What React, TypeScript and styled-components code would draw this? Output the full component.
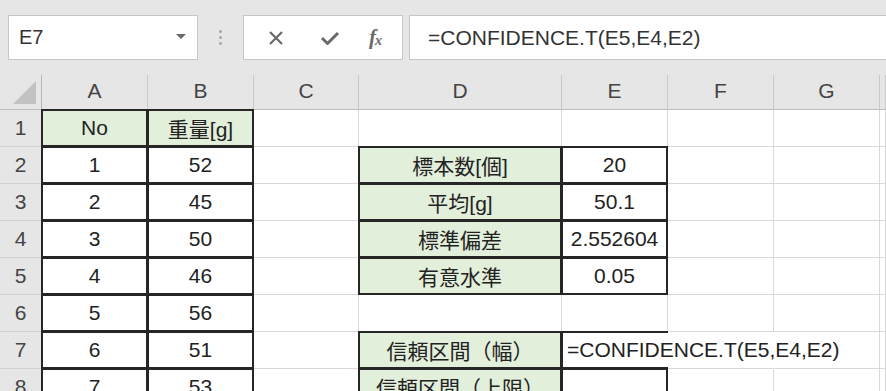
import React from "react";
import styled, { createGlobalStyle, css } from "styled-components";

const Global = createGlobalStyle`
  html, body { margin: 0; padding: 0; background: #ffffff; overflow: hidden; }
  body { width: 886px; height: 391px; font-family: "Liberation Sans", "Noto Sans CJK JP", sans-serif; }
`;

const Page = styled.div`
  width: 886px;
  height: 391px;
  overflow: hidden;
  display: flex;
  flex-direction: column;
`;

const Toolbar = styled.div`
  flex: 0 0 75px;
  height: 75px;
  box-sizing: border-box;
  padding: 15px 0 15px 8px;
  background: #e6e6e6;
  display: flex;
  align-items: stretch;
`;

const NameBox = styled.div`
  width: 190px;
  box-sizing: border-box;
  background: #fff;
  border: 1px solid #c6c6c6;
  display: flex;
  align-items: center;
  justify-content: space-between;
  padding: 0 11px 0 10px;
  font-size: 20px;
  color: #333;
`;

const DropArrow = styled.span`
  width: 0;
  height: 0;
  border-left: 5px solid transparent;
  border-right: 5px solid transparent;
  border-top: 5px solid #6a6a6a;
  margin-top: -2px;
`;

const Grip = styled.div`
  width: 45px;
  display: flex;
  flex-direction: column;
  align-items: center;
  justify-content: center;
  gap: 3px;
`;

const GripDot = styled.span`
  width: 3px;
  height: 3px;
  background: #a8a8a8;
  border-radius: 50%;
`;

const FxButtons = styled.div`
  width: 160px;
  box-sizing: border-box;
  background: #fff;
  border: 1px solid #c6c6c6;
  display: grid;
  grid-template-columns: 56px 52px 1fr;
  align-items: center;
  justify-items: center;
  padding-left: 4px;
`;

const FxLabel = styled.span`
  font-family: "Liberation Serif", serif;
  font-style: italic;
  font-weight: bold;
  font-size: 21px;
  color: #6a6a6a;
  margin-right: 8px;
  letter-spacing: -1px;
  & > sub {
    font-size: 14px;
    vertical-align: -1px;
  }
`;

const FormulaInput = styled.div`
  flex: 1;
  margin-left: 6px;
  margin-right: -2px;
  background: #fff;
  border: 1px solid #c6c6c6;
  display: flex;
  align-items: center;
  padding-left: 18px;
  font-size: 21px;
  color: #333;
  white-space: nowrap;
`;

const Sheet = styled.div`
  flex: 0 0 auto;
  display: grid;
  grid-template-columns: 42px 106px 106px 105px 203px 106px 106px 106px 1fr;
  grid-template-rows: 35px repeat(8, 37px);
  font-size: 21px;
  color: #222;
`;

const ColHead = styled.div<{ $corner?: boolean }>`
  position: relative;
  background: #e6e6e6;
  color: #444;
  display: flex;
  align-items: center;
  justify-content: center;
  box-sizing: border-box;
  border-right: 1px solid ${(p) => (p.$corner ? "#b8b8b8" : "#c9c9c9")};
  border-bottom: 1px solid #bdbdbd;
  padding-bottom: 2px;
`;

const Corner = styled.span`
  position: absolute;
  right: 5px;
  bottom: 5px;
  width: 0;
  height: 0;
  border-left: 23px solid transparent;
  border-bottom: 23px solid #c2c2c2;
`;

const RowHead = styled.div`
  background: #e6e6e6;
  color: #444;
  display: flex;
  align-items: center;
  justify-content: center;
  box-sizing: border-box;
  border-right: 1px solid #b8b8b8;
  border-bottom: 1px solid #d2d2d2;
`;

const Cell = styled.div<{ $fill?: boolean; $frame?: string; $left?: boolean; $noGrid?: boolean }>`
  position: relative;
  box-sizing: border-box;
  display: flex;
  align-items: center;
  justify-content: ${(p) => (p.$left ? "flex-start" : "center")};
  padding-left: ${(p) => (p.$left ? "5px" : "0")};
  white-space: nowrap;
  background: ${(p) => (p.$fill ? "#e2efda" : "transparent")};
  border-right: 1px solid ${(p) => (p.$noGrid ? "transparent" : "#d9d9d9")};
  border-bottom: 1px solid #d9d9d9;
  ${(p) =>
    p.$frame &&
    css`
      &::after {
        content: "";
        position: absolute;
        inset: -1px;
        z-index: 1;
        pointer-events: none;
        border-style: solid;
        border-color: #262626;
        border-width: ${p.$frame.includes("t") ? 2 : 0}px ${p.$frame.includes("r") ? 2 : 0}px
          ${p.$frame.includes("b") ? 2 : 0}px ${p.$frame.includes("l") ? 2 : 0}px;
      }
    `}
`;

const CellText = styled.span`
  position: relative;
  z-index: 2;
`;

type Row = { a: string; b: string; d?: string; e?: string };

const FORMULA = "=CONFIDENCE.T(E5,E4,E2)";

const rows: Row[] = [
  { a: "No", b: "重量[g]" },
  { a: "1", b: "52", d: "標本数[個]", e: "20" },
  { a: "2", b: "45", d: "平均[g]", e: "50.1" },
  { a: "3", b: "50", d: "標準偏差", e: "2.552604" },
  { a: "4", b: "46", d: "有意水準", e: "0.05" },
  { a: "5", b: "56" },
  { a: "6", b: "51", d: "信頼区間（幅）", e: FORMULA },
  { a: "7", b: "53", d: "信頼区間（上限）", e: "" },
];

const columns = ["A", "B", "C", "D", "E", "F", "G", "H"];

function CancelIcon() {
  return (
    <svg width="16" height="16" viewBox="0 0 16 16">
      <path d="M2 2 L14 14 M14 2 L2 14" stroke="#6a6a6a" strokeWidth="2.2" fill="none" />
    </svg>
  );
}

function EnterIcon() {
  return (
    <svg width="20" height="16" viewBox="0 0 20 16">
      <path d="M2 8 L7.5 13.5 L18 3" stroke="#6a6a6a" strokeWidth="3" fill="none" strokeLinejoin="round" />
    </svg>
  );
}

export default function App() {
  return (
    <Page>
      <Global />
      <Toolbar>
        <NameBox>
          <span>E7</span>
          <DropArrow />
        </NameBox>
        <Grip>
          <GripDot />
          <GripDot />
          <GripDot />
        </Grip>
        <FxButtons>
          <CancelIcon />
          <EnterIcon />
          <FxLabel>
            f<sub>x</sub>
          </FxLabel>
        </FxButtons>
        <FormulaInput>{FORMULA}</FormulaInput>
      </Toolbar>
      <Sheet>
        <ColHead $corner>
          <Corner />
        </ColHead>
        {columns.map((c) => (
          <ColHead key={c}>{c === "H" ? "" : c}</ColHead>
        ))}
        {rows.map((r, i) => {
          const n = i + 1;
          const isFormula = r.e === FORMULA;
          const hasD = r.d !== undefined;
          return (
            <React.Fragment key={n}>
              <RowHead>{n}</RowHead>
              <Cell $fill={n === 1} $frame="trbl">
                <CellText>{r.a}</CellText>
              </Cell>
              <Cell $fill={n === 1} $frame="trbl">
                <CellText>{r.b}</CellText>
              </Cell>
              <Cell />
              <Cell $fill={hasD} $frame={hasD ? "trbl" : undefined}>
                <CellText>{r.d}</CellText>
              </Cell>
              <Cell
                $frame={hasD ? (isFormula ? "tlb" : "trbl") : undefined}
                $left={isFormula}
                $noGrid={isFormula}
              >
                <CellText>{r.e}</CellText>
              </Cell>
              <Cell $noGrid={isFormula} />
              <Cell />
              <Cell />
            </React.Fragment>
          );
        })}
      </Sheet>
    </Page>
  );
}
